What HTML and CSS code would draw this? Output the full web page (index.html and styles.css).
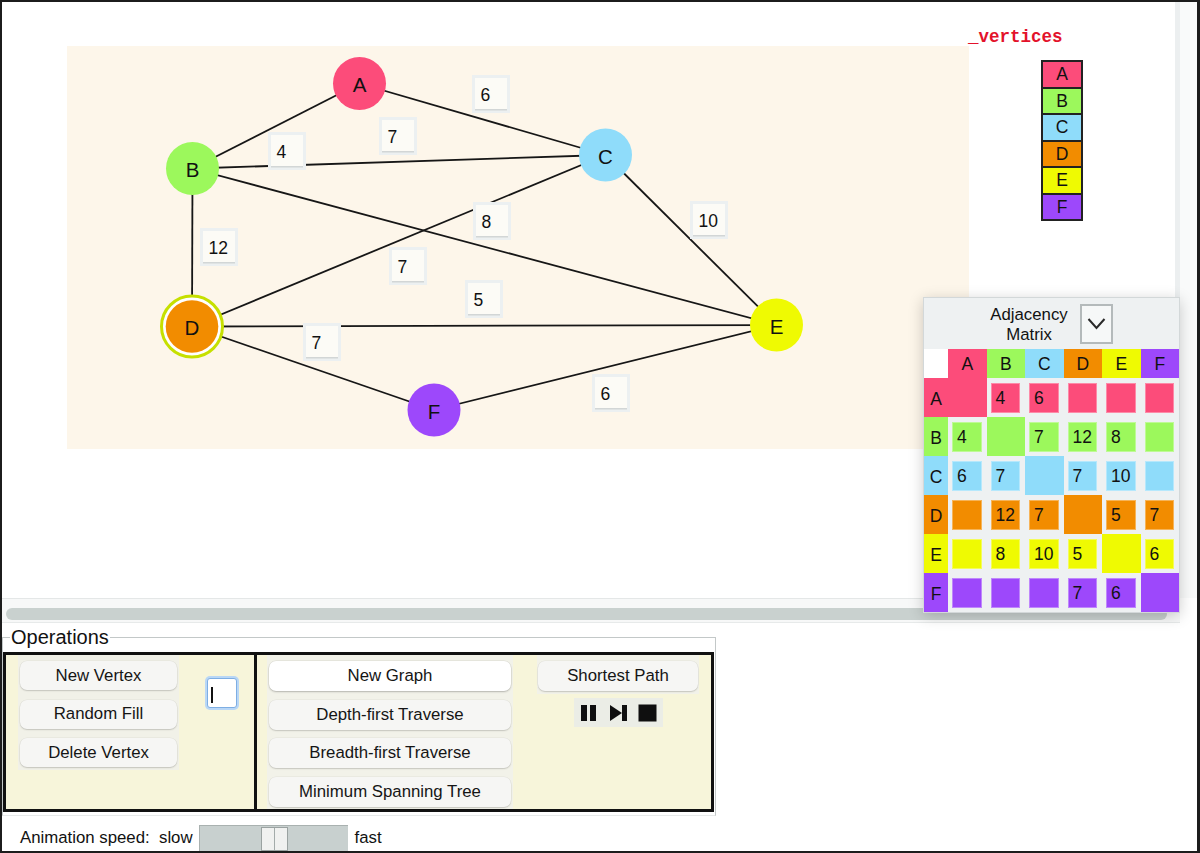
FILE: index.html
```html
<!DOCTYPE html>
<html>
<head>
<meta charset="utf-8">
<title>Graph</title>
<link rel="stylesheet" href="styles.css">
</head>
<body>
<div class="frame">
  <div class="workspace">
    <div class="canvas-area">
      <svg class="graph" width="1173" height="596" viewBox="2 2 1173 596">
        <rect class="board" x="67" y="46" width="902" height="403"/>
        <g class="edges">
          <line x1="359.5" y1="83.5" x2="192.5" y2="168.5"/>
          <line x1="359.5" y1="83.5" x2="605.5" y2="155"/>
          <line x1="192.5" y1="168.5" x2="605.5" y2="155"/>
          <line x1="192.5" y1="168.5" x2="192" y2="326.5"/>
          <line x1="192.5" y1="168.5" x2="776.5" y2="325"/>
          <line x1="605.5" y1="155" x2="192" y2="326.5"/>
          <line x1="605.5" y1="155" x2="776.5" y2="325"/>
          <line x1="192" y1="326.5" x2="776.5" y2="325"/>
          <line x1="192" y1="326.5" x2="434" y2="410"/>
          <line x1="776.5" y1="325" x2="434" y2="410"/>
        </g>
        <g class="wl" transform="translate(472,75)"><rect class="wl-o" width="38" height="38"/><rect class="wl-i" x="3" y="3" width="32" height="32"/><rect class="wl-s" x="3" y="34" width="32" height="1.5"/><text x="8.5" y="20">6</text></g>
        <g class="wl" transform="translate(379,117)"><rect class="wl-o" width="38" height="38"/><rect class="wl-i" x="3" y="3" width="32" height="32"/><rect class="wl-s" x="3" y="34" width="32" height="1.5"/><text x="8.5" y="20">7</text></g>
        <g class="wl" transform="translate(268,132)"><rect class="wl-o" width="38" height="38"/><rect class="wl-i" x="3" y="3" width="32" height="32"/><rect class="wl-s" x="3" y="34" width="32" height="1.5"/><text x="8.5" y="20">4</text></g>
        <g class="wl" transform="translate(200,228)"><rect class="wl-o" width="38" height="38"/><rect class="wl-i" x="3" y="3" width="32" height="32"/><rect class="wl-s" x="3" y="34" width="32" height="1.5"/><text x="8.5" y="20">12</text></g>
        <g class="wl" transform="translate(473,202)"><rect class="wl-o" width="38" height="38"/><rect class="wl-i" x="3" y="3" width="32" height="32"/><rect class="wl-s" x="3" y="34" width="32" height="1.5"/><text x="8.5" y="20">8</text></g>
        <g class="wl" transform="translate(690,201)"><rect class="wl-o" width="38" height="38"/><rect class="wl-i" x="3" y="3" width="32" height="32"/><rect class="wl-s" x="3" y="34" width="32" height="1.5"/><text x="8.5" y="20">10</text></g>
        <g class="wl" transform="translate(389,247)"><rect class="wl-o" width="38" height="38"/><rect class="wl-i" x="3" y="3" width="32" height="32"/><rect class="wl-s" x="3" y="34" width="32" height="1.5"/><text x="8.5" y="20">7</text></g>
        <g class="wl" transform="translate(465,280)"><rect class="wl-o" width="38" height="38"/><rect class="wl-i" x="3" y="3" width="32" height="32"/><rect class="wl-s" x="3" y="34" width="32" height="1.5"/><text x="8.5" y="20">5</text></g>
        <g class="wl" transform="translate(303,323)"><rect class="wl-o" width="38" height="38"/><rect class="wl-i" x="3" y="3" width="32" height="32"/><rect class="wl-s" x="3" y="34" width="32" height="1.5"/><text x="8.5" y="20">7</text></g>
        <g class="wl" transform="translate(592,374)"><rect class="wl-o" width="38" height="38"/><rect class="wl-i" x="3" y="3" width="32" height="32"/><rect class="wl-s" x="3" y="34" width="32" height="1.5"/><text x="8.5" y="20">6</text></g>
        <g class="nodes">
          <circle class="n-a" cx="359.5" cy="83.5" r="26.5"/>
          <circle class="n-b" cx="192.5" cy="168.5" r="26.5"/>
          <circle class="n-c" cx="605.5" cy="155" r="26.5"/>
          <circle class="ring" cx="192" cy="326.5" r="30.5"/>
          <circle class="n-d" cx="192" cy="326.5" r="26.3"/>
          <circle class="n-e" cx="776.5" cy="325" r="26.5"/>
          <circle class="n-f" cx="434" cy="410" r="26.5"/>
          <text x="359.5" y="84.5">A</text>
          <text x="192.5" y="169.5">B</text>
          <text x="605.5" y="156">C</text>
          <text x="192" y="327.5">D</text>
          <text x="776.5" y="326">E</text>
          <text x="434" y="411">F</text>
        </g>
      </svg>
      <div class="vertices-label">_vertices</div>
      <div class="vertex-stack">
        <div class="vs ca">A</div>
        <div class="vs cb">B</div>
        <div class="vs cc">C</div>
        <div class="vs cd">D</div>
        <div class="vs ce">E</div>
        <div class="vs cf">F</div>
      </div>
    </div>
    <div class="vscroll"></div>
  </div>
  <div class="hscroll"><div class="hthumb"></div></div>
  <fieldset class="ops">
    <legend>Operations</legend>
    <div class="ops-box">
      <div class="left-panel">
        <div class="btn-col">
          <div class="btn">New Vertex</div>
          <div class="btn">Random Fill</div>
          <div class="btn">Delete Vertex</div>
        </div>
        <div class="txt-input"><span class="caret"></span></div>
      </div>
      <div class="right-panel">
        <div class="btn-col2">
          <div class="btn btn-tall btn-white">New Graph</div>
          <div class="btn btn-tall">Depth-first Traverse</div>
          <div class="btn btn-tall">Breadth-first Traverse</div>
          <div class="btn btn-tall">Minimum Spanning Tree</div>
        </div>
        <div class="sp-col">
          <div class="sp-box"><div class="btn btn-tall">Shortest Path</div></div>
          <div class="media">
            <svg class="mi" width="19" height="18" viewBox="0 0 19 18"><rect x="1" y="1" width="6" height="16"/><rect x="10" y="1" width="6" height="16"/></svg>
            <svg class="mi" width="19" height="18" viewBox="0 0 19 18"><polygon points="1,1 13,9 1,17"/><rect x="13" y="1" width="5" height="16"/></svg>
            <svg class="mi" width="19" height="18" viewBox="0 0 19 18"><rect x="0.5" y="0.5" width="18" height="17"/></svg>
          </div>
        </div>
      </div>
    </div>
  </fieldset>
  <div class="speed">
    <span class="speed-label">Animation speed:  slow</span>
    <div class="track"><div class="thumb"></div></div>
    <span class="fast">fast</span>
  </div>
  <div class="matrix">
    <div class="mhead">
      <div class="mtitle">Adjacency<br>Matrix</div>
      <div class="mdrop"><svg width="19" height="13" viewBox="0 0 19 13"><polyline points="1.5,2 9.5,11 17.5,2"/></svg></div>
    </div>
    <div class="mgrid">
      <div class="corner"></div>
      <div class="mh ca">A</div><div class="mh cb">B</div><div class="mh cc">C</div><div class="mh cd">D</div><div class="mh ce">E</div><div class="mh cf">F</div>

      <div class="rh ca">A</div>
      <div class="dg ca"></div>
      <div class="mc"><div class="sq ca">4</div></div>
      <div class="mc"><div class="sq ca">6</div></div>
      <div class="mc"><div class="sq ca"></div></div>
      <div class="mc"><div class="sq ca"></div></div>
      <div class="mc"><div class="sq ca"></div></div>

      <div class="rh cb">B</div>
      <div class="mc"><div class="sq cb">4</div></div>
      <div class="dg cb"></div>
      <div class="mc"><div class="sq cb">7</div></div>
      <div class="mc"><div class="sq cb">12</div></div>
      <div class="mc"><div class="sq cb">8</div></div>
      <div class="mc"><div class="sq cb"></div></div>

      <div class="rh cc">C</div>
      <div class="mc"><div class="sq cc">6</div></div>
      <div class="mc"><div class="sq cc">7</div></div>
      <div class="dg cc"></div>
      <div class="mc"><div class="sq cc">7</div></div>
      <div class="mc"><div class="sq cc">10</div></div>
      <div class="mc"><div class="sq cc"></div></div>

      <div class="rh cd">D</div>
      <div class="mc"><div class="sq cd"></div></div>
      <div class="mc"><div class="sq cd">12</div></div>
      <div class="mc"><div class="sq cd">7</div></div>
      <div class="dg cd"></div>
      <div class="mc"><div class="sq cd">5</div></div>
      <div class="mc"><div class="sq cd">7</div></div>

      <div class="rh ce">E</div>
      <div class="mc"><div class="sq ce"></div></div>
      <div class="mc"><div class="sq ce">8</div></div>
      <div class="mc"><div class="sq ce">10</div></div>
      <div class="mc"><div class="sq ce">5</div></div>
      <div class="dg ce"></div>
      <div class="mc"><div class="sq ce">6</div></div>

      <div class="rh cf">F</div>
      <div class="mc"><div class="sq cf"></div></div>
      <div class="mc"><div class="sq cf"></div></div>
      <div class="mc"><div class="sq cf"></div></div>
      <div class="mc"><div class="sq cf">7</div></div>
      <div class="mc"><div class="sq cf">6</div></div>
      <div class="dg cf"></div>
    </div>
  </div>
</div>
</body>
</html>
```
FILE: styles.css
```css
body {
  margin: 0;
  font-family: "Liberation Sans", Arial, sans-serif;
  color: #111;
  background: #fff;
}

.frame {
  width: 1200px;
  height: 853px;
  box-sizing: border-box;
  border: 2px solid #1c1c1c;
  border-right-width: 3px;
  position: relative;
  display: flex;
  flex-direction: column;
  background: #fff;
  overflow: hidden;
}

/* ---------- canvas ---------- */
.workspace {
  display: flex;
  height: 596px;
  flex: none;
}

.canvas-area {
  position: relative;
  width: 1173px;
  flex: none;
}

.graph {
  display: block;
}

.board {
  fill: #fdf6ea;
}

.edges line {
  stroke: #161616;
  stroke-width: 1.8;
}

.wl-o { fill: #ecf0f1; }
.wl-i { fill: #fcfbf6; }
.wl-s { fill: #d2d6d6; }

.wl text {
  font-family: "Liberation Sans", Arial, sans-serif;
  font-size: 17.5px;
  fill: #111;
  dominant-baseline: central;
}

.nodes text {
  font-family: "Liberation Sans", Arial, sans-serif;
  font-size: 20.5px;
  fill: #111;
  text-anchor: middle;
  dominant-baseline: central;
}

.n-a { fill: #fc4c7a; }
.n-b { fill: #9cf85c; }
.n-c { fill: #8fdcfa; }
.n-d { fill: #f28c00; }
.n-e { fill: #effa02; }
.n-f { fill: #9d48fb; }

.ring {
  fill: #fff;
  stroke: #c6e000;
  stroke-width: 3;
}

.vertices-label {
  position: absolute;
  left: 966px;
  top: 25px;
  font-family: "Liberation Mono", "Courier New", monospace;
  font-weight: bold;
  font-size: 17.5px;
  line-height: 20px;
  color: #e3122b;
}

.vertex-stack {
  position: absolute;
  left: 1039px;
  top: 58px;
  width: 38px;
  border: 2px solid #222;
  display: flex;
  flex-direction: column;
}

.vs {
  height: 24.5px;
  font-size: 17.5px;
  line-height: 25px;
  text-align: center;
  border-bottom: 2px solid #222;
}

.vs:last-child {
  border-bottom: none;
}

.ca { background: #fc4c7a; }
.cb { background: #9cf85c; }
.cc { background: #8fdcfa; }
.cd { background: #f28c00; }
.ce { background: #effa02; }
.cf { background: #9d48fb; }

.vscroll {
  flex: 1;
  border-left: 5px solid #eceff0;
  background: #f9fafa;
}

/* ---------- horizontal scrollbar ---------- */
.hscroll {
  flex: none;
  width: 1178px;
  height: 23px;
  box-sizing: content-box;
  border-top: 1px solid #e4e7e7;
  border-bottom: 1px solid #e7eaea;
  background: #f7f8f8;
  padding: 0;
}

.hthumb {
  margin: 9px 0 0 4px;
  width: 1161px;
  height: 12px;
  border-radius: 6px;
  background: #c9d1cf;
}

/* ---------- operations ---------- */
.ops {
  flex: none;
  margin: 4px 0 0 0;
  padding: 5px 1px 3px 0;
  border: 1px solid #c3c8c8;
  border-bottom-color: #e6e9e9;
  width: 714px;
  box-sizing: border-box;
  min-width: 0;
}

.ops legend {
  font-size: 20px;
  line-height: 20px;
  padding: 0 1px;
  margin-left: 7px;
  color: #111;
}

.ops-box {
  display: flex;
  height: 154px;
  border: 3px solid #111;
  background: #f7f5da;
}

.left-panel {
  width: 248px;
  flex: none;
  border-right: 3px solid #111;
  display: flex;
  align-items: flex-start;
}

.btn-col {
  margin-left: 12px;
  width: 157px;
  padding: 6px 2px 3px;
  background: #f1f1e8;
  display: flex;
  flex-direction: column;
  gap: 9.5px;
}

.btn {
  height: 29px;
  border-radius: 7px;
  background: #f6f6f4;
  box-shadow: 0 1px 1.5px rgba(0, 0, 0, 0.16), 0 0 0 0.5px rgba(0, 0, 0, 0.06);
  font-size: 16.8px;
  display: flex;
  align-items: center;
  justify-content: center;
  color: #151515;
  white-space: nowrap;
}

.btn-tall {
  height: 30px;
}

.btn-white {
  background: #fff;
  box-shadow: 0 1px 2px rgba(0, 0, 0, 0.22), 0 0 0 0.5px rgba(0, 0, 0, 0.08);
}

.txt-input {
  margin: 23px 0 0 28px;
  width: 28px;
  height: 28px;
  border: 1px solid #7eaee3;
  box-shadow: 0 0 0 2px #b9d7f6;
  border-radius: 3px;
  background: #fff;
  display: flex;
  align-items: flex-start;
}

.caret {
  margin: 8px 0 0 3px;
  width: 1.5px;
  height: 16px;
  background: #111;
}

.right-panel {
  flex: 1;
  display: flex;
  align-items: flex-start;
}

.btn-col2 {
  margin-left: 10px;
  width: 242px;
  padding: 6px 2px 0;
  align-self: stretch;
  background: #f2f2e9;
  display: flex;
  flex-direction: column;
  gap: 8.5px;
}

.sp-col {
  margin-left: 24px;
  width: 162px;
  display: flex;
  flex-direction: column;
  align-items: center;
}

.sp-box {
  width: 160px;
  padding: 6px 1px 3px;
  background: #f2f2e9;
}

.media {
  margin-top: 4px;
  width: 89px;
  height: 29px;
  background: #ebede6;
  display: flex;
  align-items: center;
  justify-content: center;
  gap: 10px;
}

.mi {
  display: block;
  fill: #0f0f0f;
}

/* ---------- speed ---------- */
.speed {
  flex: none;
  height: 35px;
  box-sizing: border-box;
  padding: 9px 0 0 18px;
  display: flex;
  align-items: center;
}

.speed-label {
  font-size: 16.8px;
  white-space: pre;
}

.track {
  margin-left: 6px;
  width: 149px;
  height: 26px;
  box-sizing: border-box;
  background: #c8d0cf;
  border-top: 1px solid #a9b1b0;
  border-left: 1px solid #a9b1b0;
  padding: 1px 0 0 61px;
}

.thumb {
  width: 27px;
  height: 24px;
  box-sizing: border-box;
  background: #f0f1f0;
  border: 1px solid #9aa2a1;
  display: flex;
  justify-content: center;
}

.thumb::after {
  content: "";
  width: 1px;
  height: 100%;
  background: #a3abaa;
}

.fast {
  margin-left: 7px;
  font-size: 16.8px;
}

/* ---------- matrix ---------- */
.matrix {
  position: absolute;
  left: 921px;
  top: 295px;
  width: 257px;
  box-sizing: border-box;
  border: 1px solid #d3d8d9;
  background: #eef1f2;
  box-shadow: 0 3px 14px rgba(0, 0, 0, 0.2);
}

.mhead {
  height: 51px;
  display: flex;
  align-items: center;
  justify-content: center;
  gap: 12px;
}

.mtitle {
  font-size: 16.8px;
  line-height: 20px;
  text-align: center;
  margin-top: 3px;
}

.mdrop {
  width: 33px;
  height: 40px;
  box-sizing: border-box;
  border: 2px solid #b4babb;
  background: #f6f8f8;
  display: flex;
  align-items: center;
  justify-content: center;
}

.mdrop polyline {
  fill: none;
  stroke: #2a2a2a;
  stroke-width: 2;
}

.mgrid {
  display: grid;
  grid-template-columns: 24px repeat(6, 1fr);
  grid-template-rows: 29px repeat(6, 39px);
}

.corner {
  background: #fff;
}

.mh {
  font-size: 17.5px;
  display: flex;
  align-items: center;
  justify-content: center;
  padding-top: 2px;
}

.rh {
  font-size: 17.5px;
  display: flex;
  align-items: center;
  justify-content: center;
  padding-top: 4px;
}

.mc {
  padding: 5px 5px 4px 4px;
}

.sq {
  height: 100%;
  box-sizing: border-box;
  border: 1px solid rgba(255, 255, 255, 0.35);
  font-size: 17.5px;
  line-height: 29px;
  padding-left: 4px;
}
```
